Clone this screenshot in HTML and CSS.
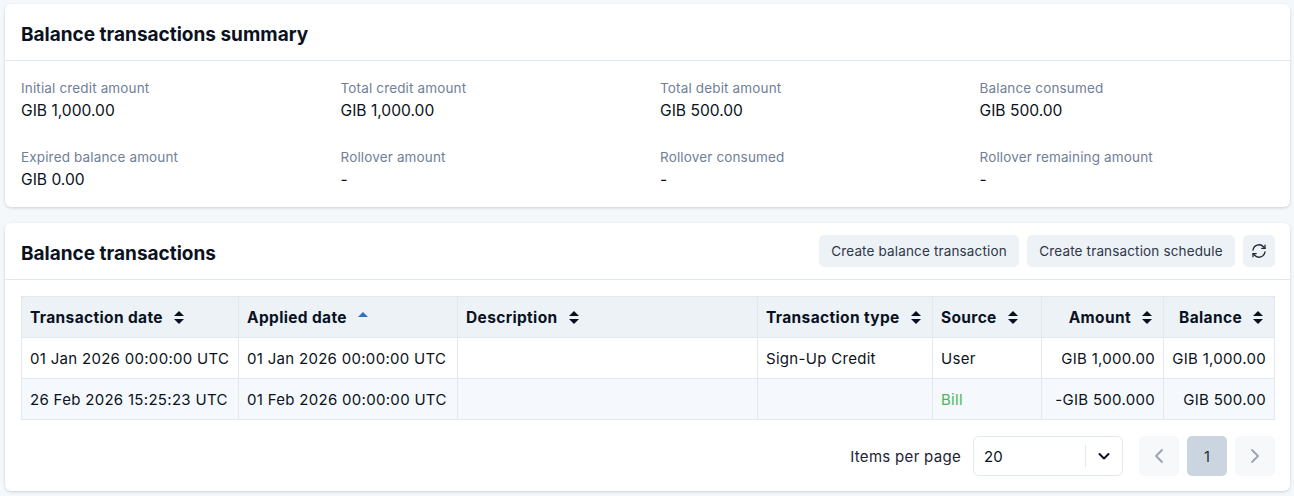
FILE: index.html
```html
<!DOCTYPE html>
<html lang="en">
<head>
  <meta charset="UTF-8">
  <meta name="viewport" content="width=device-width, initial-scale=1.0">
  <title>Balance transactions</title>
  <link rel="stylesheet" href="styles.css">
</head>
<body>
  <section class="card summary-card">
    <div class="card-header">
      <h2>Balance transactions summary</h2>
    </div>
    <div class="summary-grid">
      <div class="stat"><div class="stat-label">Initial credit amount</div><div class="stat-value">GIB 1,000.00</div></div>
      <div class="stat"><div class="stat-label">Total credit amount</div><div class="stat-value">GIB 1,000.00</div></div>
      <div class="stat"><div class="stat-label">Total debit amount</div><div class="stat-value">GIB 500.00</div></div>
      <div class="stat"><div class="stat-label">Balance consumed</div><div class="stat-value">GIB 500.00</div></div>
      <div class="stat"><div class="stat-label">Expired balance amount</div><div class="stat-value">GIB 0.00</div></div>
      <div class="stat"><div class="stat-label">Rollover amount</div><div class="stat-value">-</div></div>
      <div class="stat"><div class="stat-label">Rollover consumed</div><div class="stat-value">-</div></div>
      <div class="stat"><div class="stat-label">Rollover remaining amount</div><div class="stat-value">-</div></div>
    </div>
  </section>

  <section class="card transactions-card">
    <div class="card-header transactions-header">
      <h2>Balance transactions</h2>
      <div class="actions">
        <button class="btn btn-balance">Create balance transaction</button>
        <button class="btn btn-schedule">Create transaction schedule</button>
        <button class="btn btn-icon" aria-label="Refresh">
          <svg width="16" height="16" viewBox="0 0 16 16" fill="none" stroke="#1f2937" stroke-width="1.3" stroke-linecap="round" stroke-linejoin="round">
            <path d="M2 7.2A6 6 0 0 1 12.6 4L14 5.4"/>
            <path d="M14 2.2v3.2h-3.2"/>
            <path d="M14 8.8A6 6 0 0 1 3.4 12L2 10.6"/>
            <path d="M2 13.8v-3.2h3.2"/>
          </svg>
        </button>
      </div>
    </div>

    <div class="table-wrap">
      <table class="tx-table">
        <colgroup>
          <col class="col-tx-date">
          <col class="col-applied">
          <col class="col-desc">
          <col class="col-type">
          <col class="col-source">
          <col class="col-amount">
          <col class="col-balance">
        </colgroup>
        <thead>
          <tr>
            <th><span class="th-inner">Transaction date <i class="sort"></i></span></th>
            <th><span class="th-inner">Applied date <i class="sort sort-asc"></i></span></th>
            <th><span class="th-inner">Description <i class="sort"></i></span></th>
            <th><span class="th-inner">Transaction type <i class="sort"></i></span></th>
            <th><span class="th-inner">Source <i class="sort"></i></span></th>
            <th class="num"><span class="th-inner">Amount <i class="sort"></i></span></th>
            <th class="num"><span class="th-inner">Balance <i class="sort"></i></span></th>
          </tr>
        </thead>
        <tbody>
          <tr>
            <td>01 Jan 2026 00:00:00 UTC</td>
            <td>01 Jan 2026 00:00:00 UTC</td>
            <td></td>
            <td>Sign-Up Credit</td>
            <td>User</td>
            <td class="num">GIB 1,000.00</td>
            <td class="num">GIB 1,000.00</td>
          </tr>
          <tr class="row-alt">
            <td>26 Feb 2026 15:25:23 UTC</td>
            <td>01 Feb 2026 00:00:00 UTC</td>
            <td></td>
            <td></td>
            <td class="source-link">Bill</td>
            <td class="num">-GIB 500.000</td>
            <td class="num">GIB 500.00</td>
          </tr>
        </tbody>
      </table>
    </div>

    <div class="pager">
      <span class="pager-label">Items per page</span>
      <div class="page-select">
        <span class="page-select-value">20</span>
        <span class="page-select-arrow">
          <svg width="14" height="14" viewBox="0 0 14 14" fill="none" stroke="#0b1220" stroke-width="2" stroke-linecap="round" stroke-linejoin="round"><path d="M2.5 5l4.5 4.5L11.5 5"/></svg>
        </span>
      </div>
      <div class="pages">
        <button class="page-btn" aria-label="Previous">
          <svg width="16" height="18" viewBox="0 0 16 18" fill="none" stroke="#9ca3af" stroke-width="1.8" stroke-linecap="round" stroke-linejoin="round"><path d="M11 3L5 9l6 6"/></svg>
        </button>
        <button class="page-btn page-current">1</button>
        <button class="page-btn" aria-label="Next">
          <svg width="16" height="18" viewBox="0 0 16 18" fill="none" stroke="#9ca3af" stroke-width="1.8" stroke-linecap="round" stroke-linejoin="round"><path d="M5 3l6 6-6 6"/></svg>
        </button>
      </div>
    </div>
  </section>
</body>
</html>
```

FILE: styles.css
```css
* {
  box-sizing: border-box;
}

body {
  margin: 0;
  padding: 4px 4px 0 5px;
  height: 496px;
  overflow: hidden;
  background-color: #f5f8fb;
  color: #0b1220;
  font-family: 'Inter', 'Noto Sans', sans-serif;
  font-size: 15px;
}

.card {
  background-color: #fff;
  border-radius: 6px;
  box-shadow: 0 1px 3px rgba(30, 50, 80, 0.2);
}

.summary-card {
  height: 203px;
  margin-bottom: 16px;
}

.transactions-card {
  height: 268px;
}

.card-header {
  display: flex;
  align-items: center;
  height: 57px;
  padding: 0 15px 0 16px;
  border-bottom: 1px solid #e2e8f0;
}

h2 {
  margin: 0;
  padding-top: 5px;
  font-size: 19px;
  font-weight: 700;
  color: #0a1222;
}

.transactions-header {
  justify-content: space-between;
}

.summary-grid {
  display: grid;
  grid-template-columns: repeat(4, 1fr);
  column-gap: 25px;
  row-gap: 25px;
  padding: 17px 16px 0;
}

.stat-label {
  height: 20px;
  line-height: 20px;
  font-size: 13.5px;
  letter-spacing: 0.15px;
  color: #718096;
}

.stat-value {
  height: 24px;
  padding-top: 1px;
  line-height: 24px;
  font-size: 15.6px;
}

.actions {
  display: flex;
  gap: 8px;
}

.btn {
  height: 32px;
  border: none;
  border-radius: 5px;
  background-color: #edf2f7;
  color: #2d3748;
  font-family: inherit;
  font-size: 13.5px;
  letter-spacing: 0.15px;
  padding: 0;
}

.btn-balance {
  width: 200px;
}

.btn-schedule {
  width: 208px;
}

.btn-icon {
  display: flex;
  align-items: center;
  justify-content: center;
  width: 32px;
}

.table-wrap {
  padding: 16px 16px 0;
}

.tx-table {
  width: 100%;
  table-layout: fixed;
  border-collapse: collapse;
  font-size: 15px;
  letter-spacing: 0.3px;
}

.col-tx-date { width: 217px; }
.col-applied { width: 219px; }
.col-desc { width: 300px; }
.col-type { width: 175px; }
.col-source { width: 109px; }
.col-amount { width: 122px; }
.col-balance { width: 111px; }

.tx-table th,
.tx-table td {
  height: 41px;
  padding: 0 8px;
  border: 1px solid #e2e8f0;
  text-align: left;
  white-space: nowrap;
}

.tx-table th {
  background-color: #edf2f7;
  font-size: 15.5px;
  font-weight: 700;
  letter-spacing: 0.35px;
  color: #0a1222;
}

.th-inner {
  display: inline-flex;
  align-items: center;
  gap: 11px;
}

.tx-table .num {
  text-align: right;
}

.tx-table th.num {
  padding-right: 11px;
}

.row-alt td {
  background-color: #f5f9fd;
}

.tx-table .source-link {
  color: #4ab84f;
}

.sort {
  display: inline-block;
  position: relative;
  width: 10px;
  height: 13px;
}

.sort::before,
.sort::after {
  content: "";
  position: absolute;
  left: 0;
  border-left: 5px solid transparent;
  border-right: 5px solid transparent;
}

.sort::before {
  top: 0;
  border-bottom: 5px solid #0a1222;
}

.sort::after {
  bottom: 0;
  border-top: 5px solid #0a1222;
}

.sort-asc {
  top: 1px;
}

.sort-asc::before {
  border-bottom-color: #2f6fc4;
}

.sort-asc::after {
  display: none;
}

.pager {
  display: flex;
  align-items: center;
  justify-content: flex-end;
  margin-top: 16px;
  padding: 0 15px 0 16px;
}

.pager-label {
  margin-right: 12px;
  font-size: 15px;
  letter-spacing: 0.3px;
  color: #1a2433;
}

.page-select {
  display: flex;
  align-items: center;
  justify-content: space-between;
  width: 150px;
  height: 40px;
  border: 1px solid #e2e8f0;
  border-radius: 6px;
  padding-left: 10px;
  font-size: 15px;
}

.page-select-arrow {
  display: flex;
  align-items: center;
  justify-content: center;
  width: 37px;
  height: 22px;
  border-left: 1px solid #e2e8f0;
}

.pages {
  display: flex;
  gap: 8px;
  margin-left: 16px;
}

.page-btn {
  display: flex;
  align-items: center;
  justify-content: center;
  width: 40px;
  height: 40px;
  border: none;
  border-radius: 5px;
  background-color: #f6f8fa;
  font-family: inherit;
  font-size: 14.5px;
  color: #1f2937;
  padding: 0;
}

.page-current {
  background-color: #cbd5e0;
}
```
